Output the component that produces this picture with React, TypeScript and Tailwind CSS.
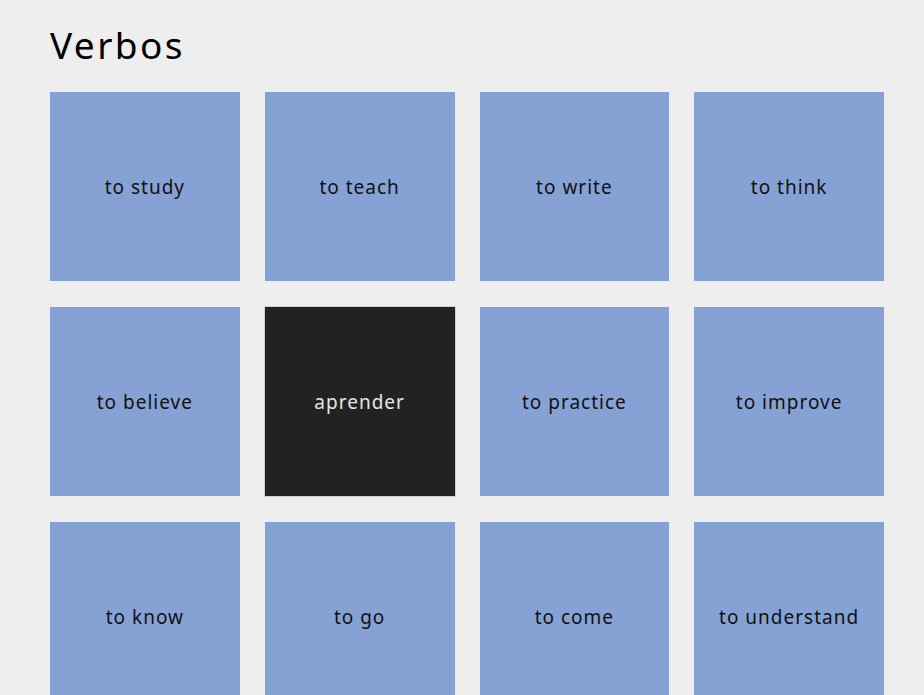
const words = [
  "to study",
  "to teach",
  "to write",
  "to think",
  "to believe",
  "aprender",
  "to practice",
  "to improve",
  "to know",
  "to go",
  "to come",
  "to understand",
];

export default function App() {
  return (
    <div className="min-h-screen bg-[#eeeeee] font-['Noto_Sans',sans-serif]">
      <div className="w-[834px] ml-[50px] pt-[20px]">
        <h1 className="text-[37px] leading-[50px] text-black mb-[22px] tracking-[2.4px]">Verbos</h1>
        <div className="grid grid-cols-4 gap-x-[25px] gap-y-[26px]">
          {words.map((w) => {
            const flipped = w === "aprender";
            return (
              <div
                key={w}
                className={
                  flipped
                    ? "h-[189px] flex items-center justify-center pt-[2px] bg-[#222222] outline outline-1 outline-[#cfcfcf] text-[#e6e6e6] text-[19px] tracking-[1px]"
                    : "h-[189px] flex items-center justify-center pt-[2px] bg-[#86a2d4] text-[#111111] text-[19px] tracking-[1px]"
                }
              >
                {w}
              </div>
            );
          })}
        </div>
      </div>
    </div>
  );
}
